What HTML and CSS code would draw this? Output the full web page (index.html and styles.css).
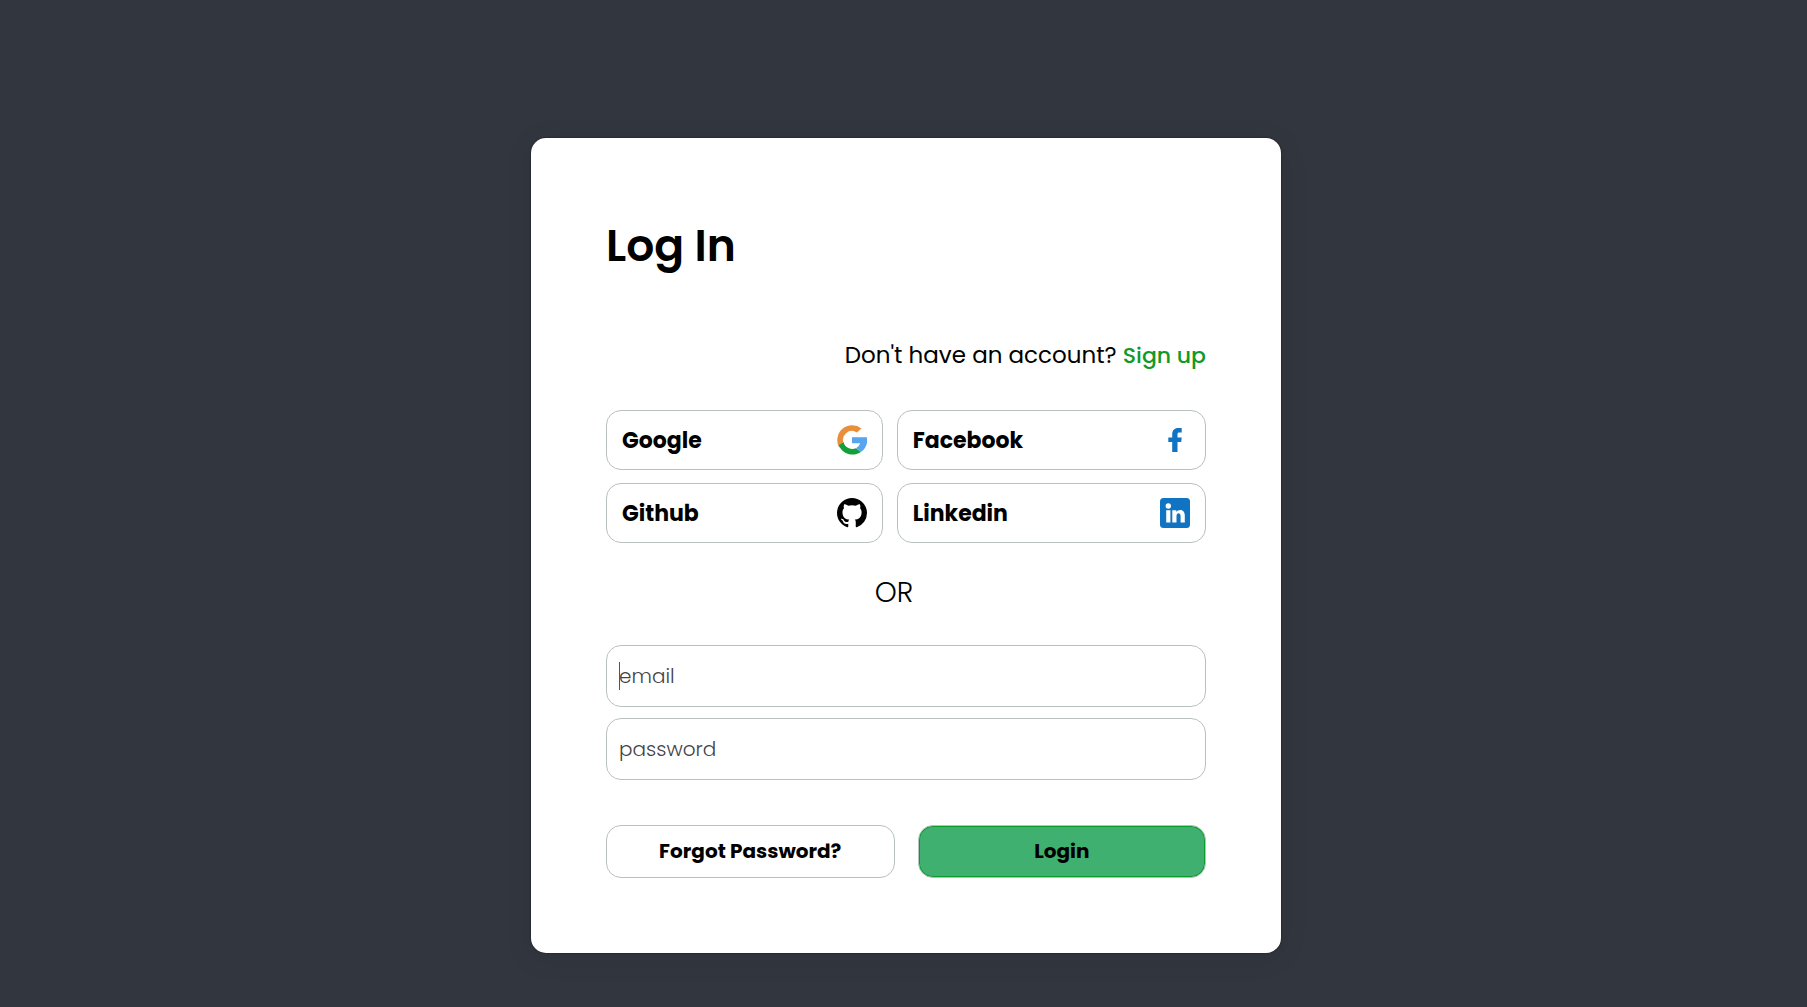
FILE: index.html
```html
<!DOCTYPE html>
<html lang="en">
<head>
<meta charset="utf-8">
<meta name="viewport" content="width=device-width, initial-scale=1">
<title>Log In</title>
<link rel="stylesheet" href="styles.css">
</head>
<body>
<main class="card">
  <h1 class="title">Log In</h1>
  <p class="signup">Don't have an account? <a href="#signup">Sign up</a></p>
  <div class="providers">
    <button type="button" class="box provider">Google
      <svg class="icon" viewBox="0 0 30 30" aria-hidden="true">
        <path fill="#e98f3c" d="M24.500 3.400A15 15 0 0 0 2.200 22.600L7 18.900A8.900 8.900 0 0 1 19.900 7.500Z"/>
        <path fill="#12a03a" d="M1.700 20.300A15 15 0 0 0 24 27L19 23.200A9 9 0 0 1 6.600 17.200Z"/>
        <path fill="#58a4ee" d="M15 12.200H29.900Q31.500 21.600 24 27L19 23.200Q22.400 21.200 23.200 18.200H15Z"/>
      </svg>
    </button>
    <button type="button" class="box provider">Facebook
      <svg class="icon" viewBox="0 0 30 30" aria-hidden="true">
        <path fill="#1074c2" d="M12.200 27V17.100H8.300V12.500H12.200V9.500C12.200 5.300 14.500 3 18.200 3H21.700V7.400H19.400C17.900 7.400 17.500 8 17.500 9.300V12.500H21.700L21.200 17.100H17.500V27Z"/>
      </svg>
    </button>
    <button type="button" class="box provider">Github
      <svg class="icon" viewBox="0 0 16 16" aria-hidden="true">
        <path fill="#000" d="M8 0C3.580 0 0 3.580 0 8c0 3.540 2.290 6.530 5.470 7.590.4.070.55-.17.55-.38 0-.19-.01-.82-.01-1.490-2.010.37-2.530-.49-2.690-.94-.09-.23-.48-.94-.82-1.130-.28-.15-.68-.52-.01-.53.63-.01 1.080.58 1.230.82.72 1.210 1.870.87 2.330.66.070-.52.28-.87.51-1.070-1.780-.2-3.640-.89-3.640-3.950 0-.87.31-1.590.82-2.150-.08-.2-.36-1.020.08-2.120 0 0 .67-.21 2.200.82.64-.18 1.320-.27 2-.27s1.360.09 2 .27c1.530-1.040 2.200-.82 2.200-.82.44 1.100.16 1.920.08 2.120.51.56.82 1.270.82 2.150 0 3.070-1.870 3.750-3.650 3.950.29.25.54.73.54 1.480 0 1.070-.01 1.930-.01 2.200 0 .21.15.46.55.38A8.010 8.010 0 0 0 16 8c0-4.420-3.580-8-8-8Z"/>
      </svg>
    </button>
    <button type="button" class="box provider">Linkedin
      <svg class="icon" viewBox="0 0 30 30" aria-hidden="true">
        <rect width="30" height="30" rx="3.500" fill="#1074c2"/>
        <circle cx="8.300" cy="8" r="2.700" fill="#fff"/>
        <path fill="#fff" d="M6.200 12.200H10.400V24.500H6.200ZM12.300 12.200H16.300V13.900C18.600 10.700 24.800 11.200 24.800 17.300V24.500H20.600V18.200C20.600 14.200 16.500 14.600 16.500 18V24.500H12.300Z"/>
      </svg>
    </button>
  </div>
  <p class="divider">OR</p>
  <form class="form">
    <div class="field">
      <input class="box input" type="email" placeholder="email" aria-label="email">
      <span class="caret"></span>
    </div>
    <div class="field">
      <input class="box input" type="password" placeholder="password" aria-label="password">
    </div>
    <div class="actions">
      <button type="button" class="box action">Forgot Password?</button>
      <button type="submit" class="box action login">Login</button>
    </div>
  </form>
</main>
</body>
</html>
```
FILE: styles.css
```css
* {
  box-sizing: border-box;
}

body {
  margin: 0;
  min-height: 100vh;
  padding: 138px 0 54px 5px;
  background: #32363f;
  color: #000;
  font-family: Poppins, Inter, "Open Sans", sans-serif;
}

.card {
  max-width: 750px;
  margin: 0 auto;
  padding: 75px;
  background: #fff;
  border-radius: 15px;
  box-shadow: 0 5px 30px rgba(0, 0, 0, 0.08), 0 0 2px rgba(0, 0, 0, 0.6);
}

.title {
  margin: 0 0 59px;
  font-size: 44px;
  font-weight: 600;
  line-height: 66px;
}

.signup {
  margin: 0 0 37px;
  font-size: 23px;
  line-height: 34px;
  text-align: right;
}

.signup a {
  color: #0f9a28;
  font-size: 22px;
  font-weight: 500;
  text-decoration: none;
}

.box {
  border: 1px solid #b9c0c0;
  border-radius: 15px;
  background: #fff;
  color: #000;
  font-family: inherit;
}

.providers {
  display: grid;
  grid-template-columns: 17fr 19fr;
  gap: 13px 14px;
}

.provider {
  display: flex;
  align-items: center;
  justify-content: space-between;
  height: 60px;
  padding: 0 15px;
  font-size: 22px;
  font-weight: 700;
}

.icon {
  width: 30px;
  height: 30px;
}

.divider {
  margin: 29px 0 31px;
  padding-right: 24px;
  font-size: 28px;
  font-weight: 300;
  line-height: 42px;
  text-align: center;
}

.form {
  display: grid;
  gap: 11px;
}

.field {
  position: relative;
}

.input {
  display: block;
  width: 100%;
  height: 62px;
  padding: 0 12px;
  font-size: 20px;
  font-weight: 300;
  outline: none;
}

.input::placeholder {
  color: #444;
  opacity: 1;
}

.caret {
  position: absolute;
  top: 17px;
  left: 13px;
  width: 1px;
  height: 28px;
  background: #555;
}

.actions {
  display: grid;
  grid-template-columns: 1fr 1fr;
  gap: 23px;
  margin-top: 34px;
}

.action {
  height: 53px;
  padding: 0 0 2px;
  font-size: 20px;
  font-weight: 700;
}

.login {
  background: #40b070;
  box-shadow: inset 0 0 0 1px #0a9c2c;
}
```
